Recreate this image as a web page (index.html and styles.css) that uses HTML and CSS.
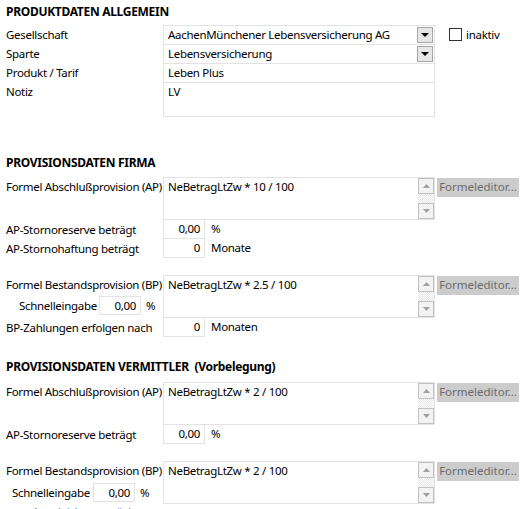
FILE: index.html
```html
<!DOCTYPE html>
<html lang="de">
<head>
<meta charset="utf-8">
<title>Produktdaten</title>
<link rel="stylesheet" href="styles.css">
</head>
<body>
<div class="page">
  <h2 class="sec sec-first">PRODUKTDATEN ALLGEMEIN</h2>
  <div class="grid-top">
    <div class="lbl">Gesellschaft</div>
    <div class="cell"><span class="val">AachenMünchener Lebensversicherung AG</span><span class="dd"><svg width="8" height="4" viewBox="0 0 8 4"><path d="M0 0H8L4 4Z" fill="#000"/></svg></span></div>
    <div class="chk"><span class="cbox"></span>inaktiv</div>
    <div class="lbl">Sparte</div>
    <div class="cell"><span class="val">Lebensversicherung</span><span class="dd"><svg width="8" height="4" viewBox="0 0 8 4"><path d="M0 0H8L4 4Z" fill="#000"/></svg></span></div>
    <div></div>
    <div class="lbl">Produkt / Tarif</div>
    <div class="cell"><span class="val">Leben Plus</span></div>
    <div></div>
    <div class="lbl">Notiz</div>
    <div class="cell cell-last"><span class="val">LV</span></div>
    <div></div>
  </div>

  <h2 class="sec sec-firma">PROVISIONSDATEN FIRMA</h2>
  <div class="frow">
    <div class="lbl lbl-formel">Formel Abschlußprovision (AP)</div>
    <div class="fbox">
      <div class="ftext">NeBetragLtZw * 10 / 100</div>
      <div class="scroll">
        <span class="sbtn"><svg width="7" height="4" viewBox="0 0 7 4"><path d="M0 4H7L3.5 0Z" fill="#a0a0a0"/></svg></span>
        <span class="track"></span>
        <span class="sbtn"><svg width="7" height="4" viewBox="0 0 7 4"><path d="M0 0H7L3.5 4Z" fill="#a0a0a0"/></svg></span>
      </div>
    </div>
    <div class="btn">Formeleditor...</div>
  </div>
  <div class="vrow">
    <div class="lbl">AP-Stornoreserve beträgt</div>
    <div class="num">0,00</div>
    <div class="unit">%</div>
  </div>
  <div class="vrow">
    <div class="lbl">AP-Stornohaftung beträgt</div>
    <div class="num">0</div>
    <div class="unit">Monate</div>
  </div>

  <div class="frow frow-gap">
    <div class="lblcol">
      <div class="lbl lbl-formel">Formel Bestandsprovision (BP)</div>
      <div class="quick quick-a">
        <span class="qlabel">Schnelleingabe</span>
        <span class="qnum">0,00</span>
        <span class="qunit">%</span>
      </div>
    </div>
    <div class="fbox">
      <div class="ftext">NeBetragLtZw * 2.5 / 100</div>
      <div class="scroll">
        <span class="sbtn"><svg width="7" height="4" viewBox="0 0 7 4"><path d="M0 4H7L3.5 0Z" fill="#a0a0a0"/></svg></span>
        <span class="track"></span>
        <span class="sbtn"><svg width="7" height="4" viewBox="0 0 7 4"><path d="M0 0H7L3.5 4Z" fill="#a0a0a0"/></svg></span>
      </div>
    </div>
    <div class="btn">Formeleditor...</div>
  </div>
  <div class="vrow">
    <div class="lbl">BP-Zahlungen erfolgen nach</div>
    <div class="num">0</div>
    <div class="unit">Monaten</div>
  </div>

  <h2 class="sec sec-verm">PROVISIONSDATEN VERMITTLER &nbsp;(Vorbelegung)</h2>
  <div class="frow">
    <div class="lbl lbl-formel">Formel Abschlußprovision (AP)</div>
    <div class="fbox">
      <div class="ftext">NeBetragLtZw * 2 / 100</div>
      <div class="scroll">
        <span class="sbtn"><svg width="7" height="4" viewBox="0 0 7 4"><path d="M0 4H7L3.5 0Z" fill="#a0a0a0"/></svg></span>
        <span class="track"></span>
        <span class="sbtn"><svg width="7" height="4" viewBox="0 0 7 4"><path d="M0 0H7L3.5 4Z" fill="#a0a0a0"/></svg></span>
      </div>
    </div>
    <div class="btn">Formeleditor...</div>
  </div>
  <div class="vrow">
    <div class="lbl">AP-Stornoreserve beträgt</div>
    <div class="num">0,00</div>
    <div class="unit">%</div>
  </div>

  <div class="frow frow-gap">
    <div class="lblcol">
      <div class="lbl lbl-formel">Formel Bestandsprovision (BP)</div>
      <div class="quick quick-b">
        <span class="qlabel">Schnelleingabe</span>
        <span class="qnum">0,00</span>
        <span class="qunit">%</span>
      </div>
      <div class="link">Ausgleichsansprüche</div>
    </div>
    <div class="fbox">
      <div class="ftext">NeBetragLtZw * 2 / 100</div>
      <div class="scroll">
        <span class="sbtn"><svg width="7" height="4" viewBox="0 0 7 4"><path d="M0 4H7L3.5 0Z" fill="#a0a0a0"/></svg></span>
        <span class="track"></span>
        <span class="sbtn"><svg width="7" height="4" viewBox="0 0 7 4"><path d="M0 0H7L3.5 4Z" fill="#a0a0a0"/></svg></span>
      </div>
    </div>
    <div class="btn">Formeleditor...</div>
  </div>
</div>
</body>
</html>
```

FILE: styles.css
```css
html, body {
  margin: 0;
  padding: 0;
  background: #ffffff;
  overflow: hidden;
}
.page {
  width: 528px;
  height: 509px;
  overflow: hidden;
  padding-left: 6px;
  box-sizing: border-box;
  font-family: "Noto Sans", "Open Sans", sans-serif;
  font-size: 11.5px;
  letter-spacing: -0.3px;
  color: #000;
  white-space: nowrap;
}
.sec {
  margin: 0;
  height: 16px;
  line-height: 16px;
  font-size: 12px;
  font-weight: bold;
  color: #000;
  letter-spacing: -0.3px;
}
.sec-first { margin-top: 4px; margin-bottom: 5px; }
.sec-firma { margin-top: 38px; margin-bottom: 6px; }
.sec-verm { margin-top: 22px; margin-bottom: 7px; }

.lbl {
  height: 19px;
  line-height: 19px;
}

/* top grid */
.grid-top {
  display: grid;
  grid-template-columns: 157px 272px auto;
  grid-template-rows: 19px 19px 19px 35px;
}
.cell {
  box-sizing: border-box;
  border: 1px solid #e3e3e3;
  border-bottom: none;
  display: flex;
  align-items: flex-start;
  padding-left: 4px;
}
.cell-last { border-bottom: 1px solid #e3e3e3; }
.val {
  flex: 1;
  line-height: 18px;
}
.dd {
  box-sizing: border-box;
  width: 16px;
  height: 16px;
  margin: 1px 1px 0 0;
  border: 1px solid #a6a6a6;
  background: #e6e6e6;
  display: flex;
  align-items: center;
  justify-content: center;
}
.chk {
  display: flex;
  align-items: center;
  height: 19px;
  padding-left: 14px;
}
.cbox {
  box-sizing: border-box;
  width: 13px;
  height: 13px;
  border: 1px solid #333;
  margin-right: 4px;
  background: #fff;
}

/* formula rows */
.frow {
  display: flex;
  align-items: flex-start;
}
.frow-gap { margin-top: 17px; }
.frow > .lbl-formel,
.lblcol {
  width: 157px;
  flex: none;
}
.fbox {
  box-sizing: border-box;
  width: 272px;
  height: 43px;
  border: 1px solid #e3e3e3;
  display: flex;
}
.ftext {
  flex: 1;
  padding-left: 4px;
  line-height: 17px;
}
.scroll {
  width: 16px;
  display: flex;
  flex-direction: column;
}
.sbtn {
  box-sizing: border-box;
  width: 16px;
  height: 16px;
  border: 1px solid #c2c2c2;
  background: #f2f2f2;
  display: flex;
  align-items: center;
  justify-content: center;
}
.track {
  flex: 1;
  background-color: #ffffff;
  background-image: repeating-conic-gradient(#e6e6e6 0 25%, #ffffff 0 50%);
  background-size: 2px 2px;
}
.btn {
  box-sizing: border-box;
  margin: 1px 0 0 2px;
  width: 82px;
  height: 19px;
  line-height: 18px;
  background: #cccccc;
  color: #6a6a6a;
  text-align: center;
  letter-spacing: 0;
}

/* value rows */
.vrow {
  display: flex;
  height: 19px;
}
.vrow > .lbl { width: 157px; }
.num {
  box-sizing: border-box;
  width: 42px;
  height: 19px;
  border: 1px solid #e3e3e3;
  border-top: none;
  text-align: right;
  padding-right: 4px;
  line-height: 18px;
}
.unit {
  padding-left: 6px;
  line-height: 18px;
}

/* quick entry */
.quick {
  display: flex;
  align-items: center;
  height: 19px;
  margin-top: 2px;
}
.quick-a { padding-left: 13px; }
.quick-b { padding-left: 6px; margin-top: 3px; }
.qlabel { width: 80px; }
.quick-b .qlabel { width: 81px; }
.qnum {
  box-sizing: border-box;
  width: 42px;
  height: 19px;
  border: 1px solid #e3e3e3;
  text-align: right;
  padding-right: 4px;
  line-height: 17px;
}
.qunit { padding-left: 5px; }

.link {
  margin-top: 2px;
  padding-left: 26px;
  color: #3a7bd5;
  line-height: 16px;
}
```
